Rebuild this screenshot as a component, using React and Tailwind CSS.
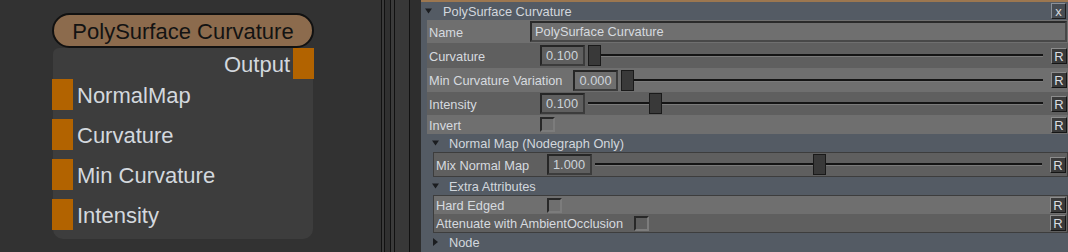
import React from 'react';

const UI = "font-['Liberation_Sans',Arial,sans-serif]";

// small triangle for collapsible sections
function Tri({ open = true }) {
  return (
    <svg width="8" height="8" viewBox="0 0 8 8" className="shrink-0">
      {open
        ? <polygon points="0,1.5 7,1.5 3.5,6.5" fill="#1b1d20" />
        : <polygon points="1,0 6,4 1,8" fill="#1b1d20" />}
    </svg>
  );
}

function RButton() {
  return (
    <div className="w-[16px] h-[16px] shrink-0 flex items-center justify-center pt-[1px] bg-[#3a3a3a] border border-t-[#8c8c8c] border-l-[#8c8c8c] border-b-[#151515] border-r-[#151515] text-[13px] leading-none text-[#d9dde2]">
      R
    </div>
  );
}

function ValueBox({ value }) {
  return (
    <div className="w-[45px] h-[21px] shrink-0 flex items-center pl-[4px] pt-[1px] border-2 border-t-[#262626] border-l-[#262626] border-b-[#3c3c3c] border-r-[#3c3c3c] text-[#cdd3da]">
      {value}
    </div>
  );
}

function Slider({ pos }) {
  return (
    <div className="relative flex-1 h-[21px] ml-[3px] mr-[8px] flex items-center">
      <div className="w-full h-[3px] bg-[#141414] border-b border-[#7a7a7a]" />
      <div
        className="absolute top-0 w-[13px] h-[21px] bg-[#393939] border border-[#1a1a1a]"
        style={{ left: pos }}
      />
    </div>
  );
}

function CheckBox() {
  return (
    <div className="w-[15px] h-[15px] shrink-0 border-2 border-t-[#282828] border-l-[#282828] border-b-[#7c7c7c] border-r-[#7c7c7c]" />
  );
}

function Label({ children }) {
  return (
    <div className="shrink-0 whitespace-nowrap pl-[2px] pr-[11px] pt-[2px] min-w-[113px]">
      {children}
    </div>
  );
}

function SliderRow({ label, value, pos, h, bg }) {
  return (
    <div className={`flex items-center pr-[1px] ${h} ${bg}`}>
      <Label>{label}</Label>
      <ValueBox value={value} />
      <Slider pos={pos} />
      <RButton />
    </div>
  );
}

function CheckRow({ label, h, bg }) {
  return (
    <div className={`flex items-center pr-[1px] ${h} ${bg}`}>
      <Label>{label}</Label>
      <CheckBox />
      <div className="flex-1" />
      <RButton />
    </div>
  );
}

function Section({ title, open = true }) {
  return (
    <div className="h-[18px] flex items-center pl-[11px] shrink-0">
      <Tri open={open} />
      <span className="ml-[9px] pt-[2px] text-[#d2d7dd]">{title}</span>
    </div>
  );
}

function Port() {
  return <div className="w-[21px] h-[31px] shrink-0 bg-[#b26300]" />;
}

function NodeGraph() {
  const inputs = ['NormalMap', 'Curvature', 'Min Curvature', 'Intensity'];
  return (
    <div className="w-[381px] h-full shrink-0 bg-[#323232] pl-[52px] pt-[13px]">
      <div className="w-[262px]">
        <div className="h-[35px] rounded-full border-2 border-[#111111] bg-[#8c6b4d] flex items-center justify-center pt-[1px] text-[22px] text-[#131313]">
          PolySurface Curvature
        </div>
        <div className="mx-[1px] bg-[#3d3d3d] rounded-t-[6px] rounded-b-[10px] pb-[9px] text-[22px] text-[#d3d8de]">
          <div className="h-[31px] flex items-center justify-end -mr-[1px]">
            <span className="mr-[3px] pt-[1px]">Output</span>
            <Port />
          </div>
          <div className="flex flex-col gap-[9px]">
            {inputs.map((name) => (
              <div key={name} className="h-[31px] flex items-center -ml-[1px]">
                <Port />
                <span className="ml-[4px] pt-[2px]">{name}</span>
              </div>
            ))}
          </div>
        </div>
      </div>
    </div>
  );
}

function Divider() {
  return (
    <div className="flex h-full shrink-0">
      <div className="w-[1px] bg-[#111111]" />
      <div className="w-[2px] bg-[#3a3a3a]" />
      <div className="w-[1px] bg-[#111111]" />
      <div className="w-[5px] bg-[#303030]" />
      <div className="w-[1px] bg-[#111111]" />
      <div className="w-[3px] bg-[#3b3b3b]" />
      <div className="w-[1px] bg-[#111111]" />
      <div className="w-[14px] bg-[#383838]" />
      <div className="w-[1px] bg-[#111111]" />
      <div className="w-[11px] bg-[#2e2e2e]" />
    </div>
  );
}

function Panel() {
  const light = 'bg-[#6f6f6f]';
  const dark = 'bg-[#5f5f5f]';
  return (
    <div className="flex-1 h-full flex flex-col bg-[#545b64] border-t-2 border-[#9c7750] text-[12.8px] text-[#d6dadf]">
      {/* header */}
      <div className="h-[18px] flex items-center pl-[4px] pr-[2px] shrink-0">
        <Tri />
        <span className="ml-[10px] pt-[2px] text-[#d2d7dd]">PolySurface Curvature</span>
        <div className="flex-1" />
        <div className="w-[15px] h-[16px] flex items-center justify-center bg-[#464c53] border border-t-[#8a9098] border-l-[#8a9098] border-b-[#1c1c1c] border-r-[#1c1c1c] text-[13px] leading-none text-[#d6dadf]">
          x
        </div>
      </div>

      <div className="ml-[6px] flex flex-col">
        <div className={`h-[23px] flex items-center pr-[1px] ${light}`}>
          <div className="w-[103px] shrink-0 pl-[2px] pt-[2px]">Name</div>
          <div className="flex-1 h-[21px] flex items-center pl-[3px] pt-[1px] border-2 border-t-[#2a2a2a] border-l-[#2a2a2a] border-b-[#484848] border-r-[#484848]">
            PolySurface Curvature
          </div>
        </div>
        <SliderRow label="Curvature" value="0.100" pos={0} h="h-[25px]" bg={dark} />
        <SliderRow label="Min Curvature Variation" value="0.000" pos={0} h="h-[24px]" bg={light} />
        <SliderRow label="Intensity" value="0.100" pos={61} h="h-[23px]" bg={dark} />
        <CheckRow label="Invert" h="h-[19px]" bg={light} />
      </div>

      <Section title="Normal Map (Nodegraph Only)" />
      <div className="ml-[12px] border border-[#3d3d3d]">
        <SliderRow label="Mix Normal Map" value="1.000" pos={218} h="h-[23px]" bg={dark} />
      </div>

      <Section title="Extra Attributes" />
      <div className="ml-[12px] border border-[#3d3d3d] h-[38px] flex flex-col">
        <CheckRow label="Hard Edged" h="h-[18px]" bg={light} />
        <CheckRow label="Attenuate with AmbientOcclusion" h="h-[18px]" bg={dark} />
      </div>

      <Section title="Node" open={false} />
    </div>
  );
}

export default function App() {
  return (
    <div className={`w-[1068px] h-[252px] flex overflow-hidden ${UI}`}>
      <NodeGraph />
      <Divider />
      <Panel />
    </div>
  );
}
